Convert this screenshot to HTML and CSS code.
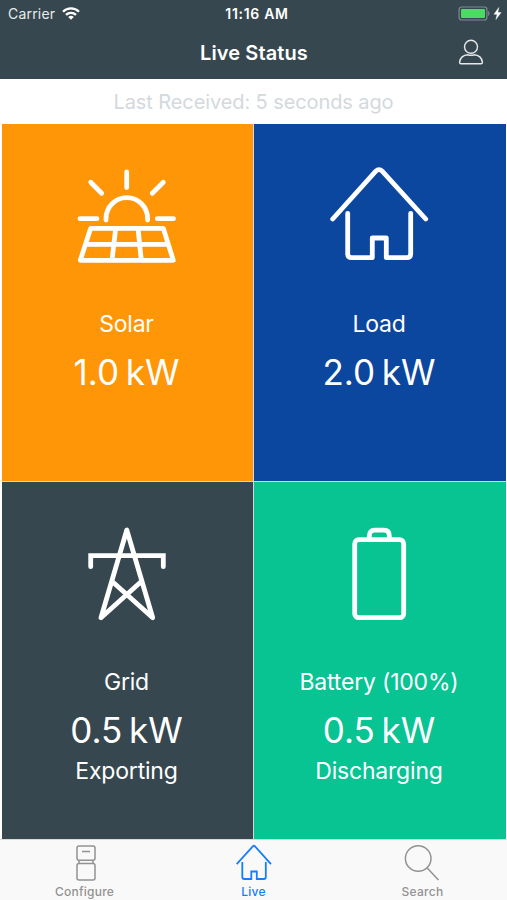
FILE: index.html
```html
<!DOCTYPE html>
<html lang="en">
<head>
    <meta charset="utf-8">
    <title>Live Status</title>
    <link rel="stylesheet" href="styles.css">
</head>
<body>
    <header>
        <div class="status-bar">
            <div class="carrier">
                <span>Carrier</span>
                <svg width="18" height="14" viewBox="0 0 18 14" fill="none" stroke="#fff" stroke-width="2.3">
                    <path d="M1 4.700a11.400 11.400 0 0 1 16 0"/>
                    <path d="M4 7.900a7.100 7.100 0 0 1 10 0"/>
                    <path d="M9 12.700L6.200 10a4 4 0 0 1 5.600 0z" fill="#fff" stroke="none"/>
                </svg>
            </div>
            <div class="time">11:16 AM</div>
            <div class="power">
                <svg width="44" height="16" viewBox="0 0 44 16">
                    <rect x=".1" y="1" width="27.8" height="13" rx="2.5" fill="none" stroke="#7f8a90" stroke-width="1.2"/>
                    <rect x="2" y="2.9" width="24" height="9.2" rx="1" fill="#4cd964"/>
                    <path d="M29.5 5.300v4.400q1.700-2.200 0-4.400z" fill="#7f8a90" stroke="#7f8a90" stroke-width=".6"/>
                    <path d="M39.800 1.500L35 8.300h3.100L36.900 13.500l5.200-7h-3.200z" fill="#fff" stroke="#fff" stroke-width=".4"/>
                </svg>
            </div>
        </div>
        <div class="nav-bar">
            <h1>Live Status</h1>
            <svg class="user" width="26" height="28" viewBox="0 0 26 28" fill="none" stroke="#e4e8ea" stroke-width="1.4">
                <circle cx="13" cy="7.8" r="6.5"/>
                <path d="M3 24.700h20q1.600 0 1.400-1.600c-.6-4.200-4-7-8.400-7.300q-3 1-6 0c-4.400.3-7.800 3.100-8.400 7.300q-.2 1.600 1.400 1.600z"/>
            </svg>
        </div>
    </header>

    <p class="received">Last Received: 5 seconds ago</p>

    <main>
        <section class="tile solar">
            <svg class="icon" viewBox="0 0 100 104">
                <path d="M49.700 7V22.500M13.700 17.300l11 11M86.300 17.300l-11 11M3 53.700h17M80.300 53.700H96.500"/>
                <path d="M29 55v-1.500a20.800 20.800 0 0 1 41.600 0V55"/>
                <path d="M13.700 63.300h72.600L96.300 95.300H3.300zM8.500 79.300h83M38.700 63.300L35 95.300M61 63.300l3.300 32"/>
            </svg>
            <h2>Solar</h2>
            <div class="value">1.0 kW</div>
        </section>
        <section class="tile load">
            <svg class="icon" viewBox="0 0 100 104">
                <path d="M3.700 54L46.800 6.200q3.200-3.300 6.400 0L96.700 54"/>
                <path d="M18.700 48.300V88.700q0 4 4 4H43.300V73h14v19.700h20.400q4 0 4-4V48.300"/>
            </svg>
            <h2>Load</h2>
            <div class="value">2.0 kW</div>
        </section>
        <section class="tile grid">
            <svg class="icon" viewBox="0 0 100 104">
                <path d="M35.500 58.700L75.700 94.700 49.800 7 24 94.700 64 58.700"/>
                <path d="M13.700 43.700v-11h72.600v11" stroke-linejoin="miter"/>
            </svg>
            <h2>Grid</h2>
            <div class="value">0.5 kW</div>
            <div class="state">Exporting</div>
        </section>
        <section class="tile battery">
            <svg class="icon" viewBox="0 0 100 104">
                <rect x="25.700" y="16.700" width="49" height="78" rx="4"/>
                <path d="M40.300 16.700v-4q0-5.500 5.500-5.500h9q5.500 0 5.500 5.500v4"/>
            </svg>
            <h2>Battery (100%)</h2>
            <div class="value">0.5 kW</div>
            <div class="state">Discharging</div>
        </section>
    </main>

    <nav>
        <a class="tab">
            <svg width="38" height="38" viewBox="0 0 38 38">
                <rect x="11" y="3" width="18" height="14.3" rx="2"/>
                <rect x="11" y="20.5" width="18" height="16.5" rx="2"/>
                <path d="M13 17.500v3M27 17.500v3M16 8.500h8"/>
            </svg>
            <span>Configure</span>
        </a>
        <a class="tab active">
            <svg width="38" height="38" viewBox="0 0 38 38">
                <path d="M1.700 21.200L18 3.200q.9-.8 1.800 0L36 21.200"/>
                <path d="M7.300 19v15q0 2 2 2H16.300V28.500h5.500V36h7q2 0 2-2V19"/>
            </svg>
            <span>Live</span>
        </a>
        <a class="tab">
            <svg width="38" height="38" viewBox="0 0 38 38">
                <circle cx="14.200" cy="15.500" r="12.800"/>
                <path d="M23.200 25L34.500 37"/>
            </svg>
            <span>Search</span>
        </a>
    </nav>
</body>
</html>
```

FILE: styles.css
```css
* {
    box-sizing: border-box;
}
body {
    margin: 0;
    height: 900px;
    display: flex;
    flex-direction: column;
    font-family: Inter, "Liberation Sans", sans-serif;
    background: #fff;
    overflow: hidden;
}
h1, h2, p {
    margin: 0;
    font-weight: 400;
}
svg {
    display: block;
}
header {
    height: 79px;
    background: #37474f;
    color: #fff;
}
.status-bar {
    height: 27px;
    display: grid;
    grid-template-columns: 1fr auto 1fr;
    align-items: center;
    padding: 0 4px 0 8px;
    font-size: 14px;
}
.carrier {
    display: flex;
    align-items: center;
    gap: 7px;
    color: #e8ecee;
    letter-spacing: 0.2px;
}
.time {
    padding-left: 3px;
    font-weight: 600;
    letter-spacing: 0.7px;
}
.power {
    justify-self: end;
}
.power svg {
    overflow: visible;
}
.nav-bar {
    height: 52px;
    display: grid;
    grid-template-columns: 1fr auto 1fr;
    align-items: center;
    padding: 0 23px;
}
.nav-bar h1 {
    grid-column: 2;
    padding-left: 1px;
    font-size: 20px;
    font-weight: 600;
    letter-spacing: 0.1px;
}
.user {
    justify-self: end;
}
.received {
    height: 45px;
    line-height: 46px;
    text-align: center;
    font-size: 20px;
    letter-spacing: -0.1px;
    color: #d3d9dc;
}
main {
    height: 715px;
    margin: 0 1px 0 2px;
    display: grid;
    grid-template-columns: 251px 252px;
    grid-template-rows: 357px 357px;
    gap: 1px;
    background: #cfd8dc;
}
.tile {
    display: flex;
    flex-direction: column;
    align-items: center;
    padding: 41px 2px 0 0;
    color: #fff;
}
.solar {
    background: #ff9608;
}
.load {
    background: #0b479f;
}
.grid {
    background: #37474f;
}
.battery {
    background: #08c392;
}
.icon {
    width: 100px;
    height: 104px;
    fill: none;
    stroke: #fff;
    stroke-width: 4.8;
    stroke-linecap: round;
    stroke-linejoin: round;
}
.tile h2 {
    margin-top: 40px;
    font-size: 23px;
    line-height: 30px;
    letter-spacing: -0.2px;
}
.value {
    margin-top: 11px;
    font-size: 35px;
    line-height: 44px;
    word-spacing: -3px;
}
.state {
    margin-top: 4px;
    font-size: 23px;
    line-height: 30px;
    letter-spacing: -0.2px;
}
nav {
    height: 61px;
    display: grid;
    grid-template-columns: repeat(3, 1fr);
    border-top: 1px solid #d5dadc;
    background: #f9f9f9;
}
.tab {
    display: flex;
    flex-direction: column;
    align-items: center;
    padding-top: 3px;
    color: #929292;
    font-size: 12px;
    font-weight: 500;
    line-height: 22px;
    letter-spacing: 0.25px;
}
.tab svg {
    fill: none;
    stroke: currentColor;
    stroke-width: 1.5;
}
.active {
    color: #157efb;
}
.active svg {
    stroke-width: 1.8;
}
```
